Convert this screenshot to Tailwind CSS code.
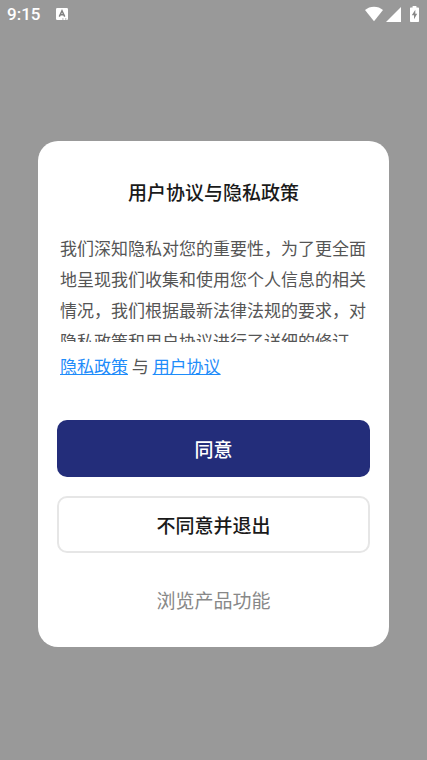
<!DOCTYPE html>
<html lang="zh-CN">
<head>
<meta charset="utf-8">
<meta name="viewport" content="width=device-width, initial-scale=1">
<title>用户协议与隐私政策</title>
<script src="https://cdn.jsdelivr.net/npm/@tailwindcss/browser@4"></script>
</head>
<body class="flex min-h-screen flex-col bg-[#999999] font-['Noto_Sans_CJK_SC',sans-serif]">
<header class="flex h-7 items-center justify-between pl-[7px] pr-2 text-white">
  <div class="flex items-center gap-4">
    <time class="font-[Roboto,sans-serif] text-[17px] leading-7 font-medium">9:15</time>
    <svg class="size-3" viewBox="0 0 12 12" aria-hidden="true">
      <rect width="12" height="12" rx="1.2" fill="#fff"/>
      <path d="M3.3 8.6 6 2.8 8.7 8.6M4.3 6.8H7.7" fill="none" stroke="#808080" stroke-width="1.5"/>
      <path d="M6.200 11h1.400M9 11h1.400" stroke="#999" stroke-width="1"/>
    </svg>
  </div>
  <div class="flex items-center">
    <svg class="h-4 w-[18px]" viewBox="0 0 18 16" aria-label="Wi-Fi" role="img">
      <path d="M9 15.2 0 4.1C2.4 1.9 5.6.7 9 .7s6.600 1.2 9 3.400Z" fill="#fff"/>
    </svg>
    <svg class="ml-[3px] size-[15px]" viewBox="0 0 15 15" aria-label="信号" role="img">
      <path d="M0 15 15 0V15Z" fill="#fff"/>
    </svg>
    <svg class="ml-[9px] h-4 w-[9px]" viewBox="0 0 9 16" aria-label="充电中" role="img">
      <path d="M2.600 0h3.800v1.500H8.200q.8 0 .8.800V15.200q0 .8-.8.800H.8Q0 16 0 15.200V2.300q0-.8.8-.8H2.600Z" fill="#fff"/>
      <path d="M5.300 3.800 1.800 9.300H4V13.200L7.200 7.700H5.300Z" fill="#888"/>
    </svg>
  </div>
</header>
<main class="flex flex-1 items-center justify-center px-[38px]">
  <section role="dialog" aria-modal="true" aria-labelledby="title" class="w-full max-w-md rounded-[20px] bg-white px-[19px] pt-[37px] pb-[33px]">
    <h1 id="title" class="text-center text-[19px] leading-7 font-medium text-[#1a1a1a]">用户协议与隐私政策</h1>
    <div class="mt-[26px] h-[110px] overflow-y-auto px-[3px] text-[17px] leading-[31px] text-[#555555] [scrollbar-width:none]">
      <p>我们深知隐私对您的重要性，为了更全面地呈现我们收集和使用您个人信息的相关情况，我们根据最新法律法规的要求，对隐私政策和用户协议进行了详细的修订。</p>
    </div>
    <p class="mt-[11px] px-[3px] text-[17px] leading-[26px] text-[#555555]"><a href="#privacy" class="text-[#1e8cfa] underline">隐私政策</a> 与 <a href="#terms" class="text-[#1e8cfa] underline">用户协议</a></p>
    <div class="mt-[41px] flex flex-col gap-[19px] text-[19px] leading-7">
      <button type="button" class="h-[57px] rounded-[10px] bg-[#232d7a] font-medium text-white">同意</button>
      <button type="button" class="h-[57px] rounded-[10px] border-2 border-[#e6e6e6] bg-white font-medium text-[#1a1a1a]">不同意并退出</button>
    </div>
    <button type="button" class="mt-[33px] w-full text-[19px] leading-7 text-[#888888]">浏览产品功能</button>
  </section>
</main>
</body>
</html>
